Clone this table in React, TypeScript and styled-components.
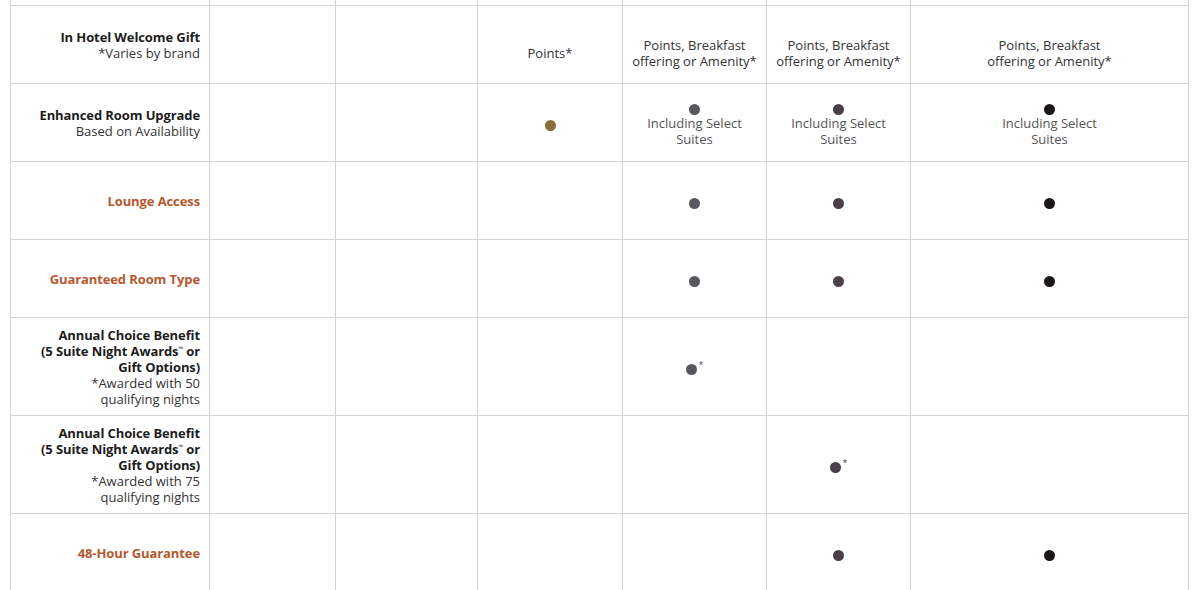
import React, { ReactNode } from 'react'
import styled, { createGlobalStyle } from 'styled-components'

const GlobalStyle = createGlobalStyle`
    html, body {
        margin: 0;
        padding: 0;
        background: #ffffff;
    }

    body {
        font-family: 'Open Sans', 'Liberation Sans', Arial, sans-serif;
        color: #1c1c1c;
        -webkit-font-smoothing: antialiased;
    }
`

const LINE = '#d4d4d4'

const TIERS = {
    gold: '#8b6b3c',
    platinum: '#55595e',
    titanium: '#4a4047',
    ambassador: '#1a1412',
}

type Tier = keyof typeof TIERS

const COLUMNS = [199, 126, 142, 145, 144, 144, 278]

const Page = styled.div`
    padding-left: 10px;
`

const Table = styled.div`
    display: flex;
    flex-direction: column;
    width: max-content;
    border-left: 1px solid ${LINE};
`

const StubRow = styled.div`
    display: flex;
    height: 5px;
`

const StubCell = styled.div<{ $width: number }>`
    width: ${(p) => p.$width}px;
    border-right: 1px solid ${LINE};
    box-sizing: border-box;
`

const BenefitRow = styled.div`
    display: flex;
    min-height: 78px;
    border-top: 1px solid ${LINE};
    box-sizing: border-box;
`

const CellBase = styled.div<{ $width: number }>`
    width: ${(p) => p.$width}px;
    box-sizing: border-box;
    border-right: 1px solid ${LINE};
    display: flex;
    flex-direction: column;
    justify-content: center;
    padding: 9px 9px 8px;
    font-size: 13px;
    line-height: 16px;
`

const LabelCell = styled(CellBase)`
    text-align: right;
    align-items: flex-end;
`

const ValueCell = styled(CellBase)`
    text-align: center;
    align-items: center;
`

const Label = styled.div<{ $accent?: boolean }>`
    font-weight: 700;
    color: ${(p) => (p.$accent ? '#b5582f' : '#1c1c1c')};
    letter-spacing: -0.1px;
`

const Tm = styled.sup`
    font-size: 6px;
    line-height: 0;
    vertical-align: 5px;
    font-weight: 400;
`

const Sub = styled.div`
    color: #333333;
    font-weight: 400;
`

const ValueText = styled.div`
    color: #333333;
    margin-top: 15px;
`

const DotLine = styled.div`
    height: 16px;
    display: flex;
    align-items: flex-end;
    justify-content: center;
`

const Dot = styled.span<{ $tier: Tier }>`
    display: block;
    width: 11px;
    height: 11px;
    border-radius: 50%;
    background: ${(p) => TIERS[p.$tier]};
`

const Star = styled.span<{ $tier: Tier }>`
    align-self: flex-start;
    margin: 1px 0 0 2px;
    font-size: 9px;
    line-height: 9px;
    color: ${(p) => TIERS[p.$tier]};
`

const Note = styled.div`
    color: #555555;
`

type Cell =
    | null
    | { dot: Tier; note?: ReactNode; star?: boolean }
    | { text: ReactNode }

type Row = {
    label: ReactNode
    sub?: ReactNode
    accent?: boolean
    cells: Cell[]
}

const offering = <>Points, Breakfast<br />offering or Amenity*</>
const suites = <>Including Select<br />Suites</>
const choice = (
    <>
        Annual Choice Benefit
        <br />
        (5 Suite Night Awards<Tm>™</Tm> or
        <br />
        Gift Options)
    </>
)

const ROWS: Row[] = [
    {
        label: 'In Hotel Welcome Gift',
        sub: '*Varies by brand',
        cells: [null, null, { text: 'Points*' }, { text: offering }, { text: offering }, { text: offering }],
    },
    {
        label: 'Enhanced Room Upgrade',
        sub: 'Based on Availability',
        cells: [
            null,
            null,
            { dot: 'gold' },
            { dot: 'platinum', note: suites },
            { dot: 'titanium', note: suites },
            { dot: 'ambassador', note: suites },
        ],
    },
    {
        label: 'Lounge Access',
        accent: true,
        cells: [null, null, null, { dot: 'platinum' }, { dot: 'titanium' }, { dot: 'ambassador' }],
    },
    {
        label: 'Guaranteed Room Type',
        accent: true,
        cells: [null, null, null, { dot: 'platinum' }, { dot: 'titanium' }, { dot: 'ambassador' }],
    },
    {
        label: choice,
        sub: <>*Awarded with 50<br />qualifying nights</>,
        cells: [null, null, null, { dot: 'platinum', star: true }, null, null],
    },
    {
        label: choice,
        sub: <>*Awarded with 75<br />qualifying nights</>,
        cells: [null, null, null, null, { dot: 'titanium', star: true }, null],
    },
    {
        label: '48-Hour Guarantee',
        accent: true,
        cells: [null, null, null, null, { dot: 'titanium' }, { dot: 'ambassador' }],
    },
]

function renderCell(cell: Cell) {
    if (!cell) {
        return null
    }
    if ('text' in cell) {
        return <ValueText>{cell.text}</ValueText>
    }
    return (
        <>
            <DotLine>
                <Dot $tier={cell.dot} />
                {cell.star ? <Star $tier={cell.dot}>*</Star> : null}
            </DotLine>
            {cell.note ? <Note>{cell.note}</Note> : null}
        </>
    )
}

export default function App() {
    return (
        <>
            <GlobalStyle />
            <Page>
                <Table>
                    <StubRow>
                        {COLUMNS.map((w, i) => (
                            <StubCell key={i} $width={w} />
                        ))}
                    </StubRow>
                    {ROWS.map((row, r) => (
                        <BenefitRow key={r}>
                            <LabelCell $width={COLUMNS[0]}>
                                <Label $accent={row.accent}>{row.label}</Label>
                                {row.sub ? <Sub>{row.sub}</Sub> : null}
                            </LabelCell>
                            {row.cells.map((cell, c) => (
                                <ValueCell key={c} $width={COLUMNS[c + 1]}>
                                    {renderCell(cell)}
                                </ValueCell>
                            ))}
                        </BenefitRow>
                    ))}
                </Table>
            </Page>
        </>
    )
}
